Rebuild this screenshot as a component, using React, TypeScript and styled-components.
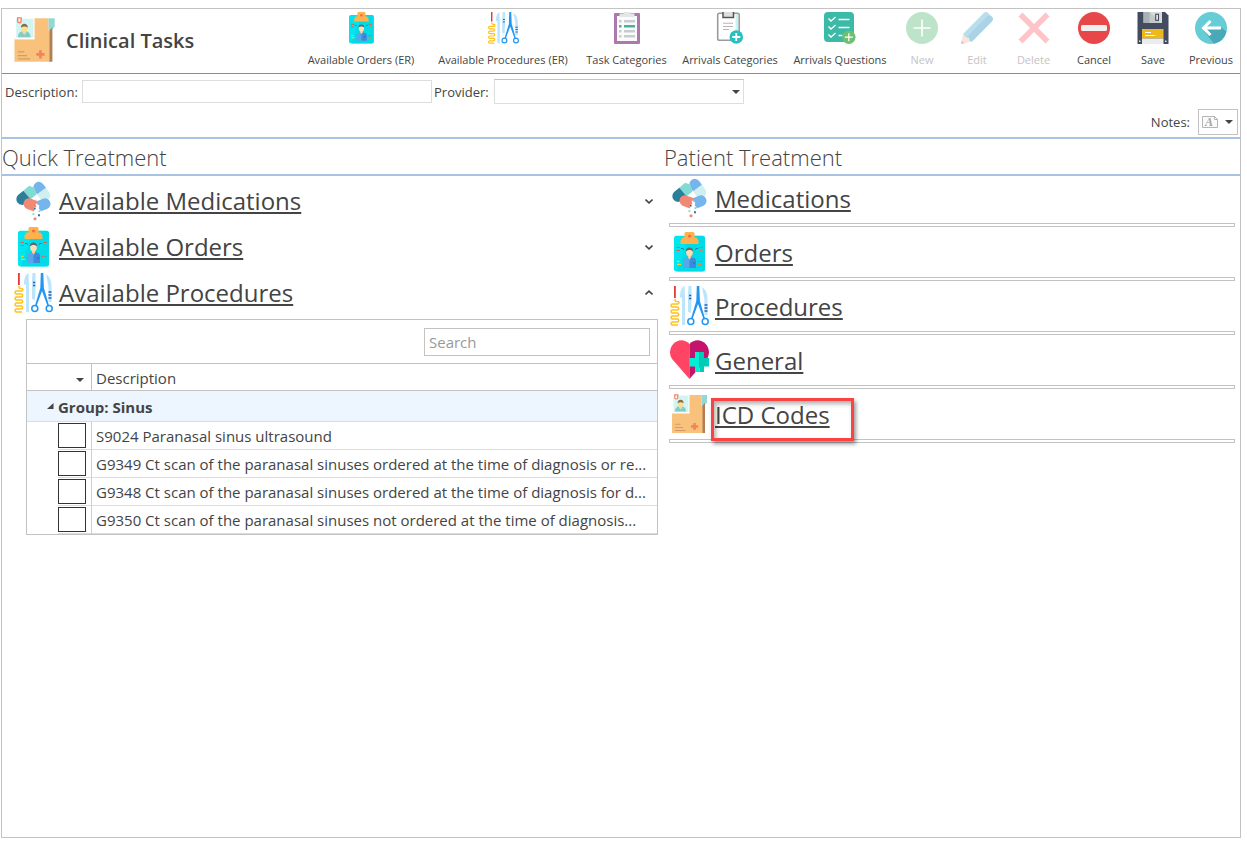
import React, { useState } from "react";
import styled, { createGlobalStyle, css } from "styled-components";

const GlobalStyle = createGlobalStyle`
  *, *::before, *::after { box-sizing: border-box; }
  body {
    margin: 0;
    background: #fff;
    color: #444;
    font-family: "Open Sans", "Noto Sans", sans-serif;
    font-size: 14px;
  }
  button, input, select { font: inherit; color: inherit; }
`;

const line = "#c3c3c3";
const accent = "#a9c3e2";

/* ---------- page frame ---------- */

const Page = styled.div`
  display: flex;
  min-height: 100vh;
  padding: 8px 6px 3px 1px;
`;

const Frame = styled.main`
  flex: 1;
  min-width: 0;
  border: 1px solid ${line};
`;

const Header = styled.header`
  display: flex;
  align-items: flex-start;
  justify-content: space-between;
  height: 65px;
  border-bottom: 1px solid #6a92c4;
`;

const Brand = styled.div`
  display: flex;
  align-items: center;
  gap: 9px;
  padding: 8px 0 0 9px;
`;

const Title = styled.h1`
  margin: 0;
  padding-top: 2px;
  font-size: 20px;
  line-height: 28px;
  font-weight: 600;
  white-space: nowrap;
`;

const Toolbar = styled.nav`
  display: flex;
`;

const ToolButton = styled.button<{ $width: number }>`
  display: flex;
  flex-direction: column;
  align-items: center;
  gap: 7px;
  width: ${(p) => p.$width}px;
  padding: 3px 0 0;
  border: 0;
  background: none;
  font-size: 11px;
  line-height: 18px;
  white-space: nowrap;
  &:disabled { color: #c4c4c4; }
`;

/* ---------- filter form ---------- */

const Form = styled.form`
  border-bottom: 2px solid ${accent};
  height: 65px;
  padding: 5px 2px 0 3px;
`;

const FieldRow = styled.div<{ $end?: boolean }>`
  display: flex;
  align-items: center;
  justify-content: ${(p) => (p.$end ? "flex-end" : "flex-start")};
  height: ${(p) => (p.$end ? 26 : 25)}px;
  margin-top: ${(p) => (p.$end ? 5 : 0)}px;
`;

const FieldLabel = styled.label<{ $width?: number }>`
  width: ${(p) => (p.$width ? `${p.$width}px` : "auto")};
  padding-right: ${(p) => (p.$width ? 0 : 8)}px;
  font-size: 13px;
  line-height: 18px;
  white-space: nowrap;
`;

const TextInput = styled.input`
  width: 350px;
  height: 23px;
  margin-right: 2px;
  padding: 0 4px;
  border: 1px solid #ddd;
  outline: 0;
`;

const SelectBox = styled.div`
  position: relative;
  width: 250px;
  height: 25px;
`;

const Select = styled.select`
  width: 100%;
  height: 100%;
  padding: 0 24px 0 4px;
  appearance: none;
  border: 1px solid #ddd;
  border-top-color: ${line};
  border-radius: 0;
  background: #fff;
  outline: 0;
`;

const SelectArrow = styled.span`
  position: absolute;
  top: 0;
  right: 4px;
  display: flex;
  align-items: center;
  height: 100%;
  pointer-events: none;
`;

const NotesButton = styled.button`
  display: flex;
  align-items: center;
  justify-content: space-between;
  width: 40px;
  height: 26px;
  padding: 0 4px 0 3px;
  border: 1px solid ${line};
  background: #fff;
`;

/* ---------- columns ---------- */

const Columns = styled.div`
  display: grid;
  grid-template-columns: 662fr 576fr;
`;

const ColumnTitle = styled.h2`
  margin: 0;
  height: 37px;
  border-bottom: 2px solid ${accent};
  font-size: 22px;
  line-height: 37px;
  font-weight: 300;
`;

const headingText = css`
  font-size: 24px;
  line-height: 36px;
  text-decoration: underline;
  text-decoration-thickness: 2px;
  text-underline-offset: 2px;
  text-decoration-skip-ink: none;
`;

const Accordion = styled.div`
  padding: 2px 6px 0 11px;
`;

const AccordionHeader = styled.button`
  display: flex;
  align-items: center;
  gap: 6px;
  width: 100%;
  height: 46px;
  padding: 0 5px 0 0;
  border: 0;
  background: none;
  text-align: left;
`;

const AccordionLabel = styled.span`
  flex: 1;
  ${headingText}
`;

const Panel = styled.section`
  margin: 3px 0 0 13px;
  border: 1px solid ${line};
`;

const SearchBar = styled.div`
  display: flex;
  align-items: center;
  justify-content: flex-end;
  height: 44px;
  padding-right: 7px;
  border-bottom: 1px solid ${line};
`;

const SearchInput = styled.input`
  width: 226px;
  height: 28px;
  padding: 0 4px;
  border: 1px solid ${line};
  font-size: 15px;
  outline: 0;
  &::placeholder { color: #999; opacity: 1; }
`;

const Table = styled.table`
  width: 100%;
  table-layout: fixed;
  border-spacing: 0;
  font-size: 15px;
  line-height: 20px;
`;

const IndentCol = styled.col`
  width: 31px;
`;

const CheckCol = styled.col`
  width: 34px;
`;

const HeadCell = styled.th<{ $sort?: boolean }>`
  height: 27px;
  padding: ${(p) => (p.$sort ? "0 7px 2px 0" : "2px 4px 0")};
  border-bottom: 1px solid ${line};
  border-right: ${(p) => (p.$sort ? `1px solid ${line}` : "0")};
  text-align: ${(p) => (p.$sort ? "right" : "left")};
  font-weight: 400;
`;

const GroupCell = styled.th`
  height: 31px;
  padding: 1px 0 0 20px;
  border-bottom: 1px solid #dcdcdc;
  background: #edf5fe;
  text-align: left;
`;

const GroupToggle = styled.button`
  display: flex;
  align-items: center;
  gap: 4px;
  padding: 0;
  border: 0;
  background: none;
  font-weight: 700;
`;

const Cell = styled.td<{ $kind: "indent" | "check" | "text" }>`
  height: 28px;
  padding: ${(p) => (p.$kind === "text" ? "1px 4px 0" : "0")};
  border-bottom: ${(p) => (p.$kind === "indent" ? "0" : "1px solid #dcdcdc")};
  border-right: ${(p) => (p.$kind === "check" ? "1px solid #c9cfd6" : "0")};
  overflow: hidden;
  white-space: nowrap;
`;

const Checkbox = styled.input`
  display: block;
  appearance: none;
  width: 28px;
  height: 25px;
  margin: 0;
  border: 1px solid #333;
  background: #fff;
  &:checked { background: #6a92c4; }
`;

const TaskList = styled.ul`
  margin: 0;
  padding: 2px 5px 0 5px;
  list-style: none;
`;

const TaskItem = styled.li`
  position: relative;
  height: 54px;
`;

const TaskLink = styled.a`
  display: flex;
  gap: 6px;
  height: 45px;
  color: inherit;
  text-decoration: none;
`;

const TaskLabel = styled.span`
  padding-top: 3px;
  ${headingText}
`;

const Splitter = styled.div`
  height: 4px;
  border: 1px solid ${line};
`;

const Highlight = styled.div`
  position: absolute;
  left: 42px;
  top: 4px;
  width: 143px;
  height: 43px;
  border: 3px solid #fb4343;
  box-shadow: 2px 3px 4px rgba(0, 0, 0, 0.4), inset 2px 3px 4px rgba(0, 0, 0, 0.3);
  pointer-events: none;
`;

/* ---------- icons ---------- */

type IconProps = { size: number };

const FolderIcon = ({ size }: IconProps) => (
  <svg width={size} height={size} viewBox="0 0 40 40" aria-hidden="true">
    <path d="M32.500 1H38v7.500l-3 3h-2.500z" fill="#93d8d6" />
    <path d="M33 12l3-3v30h-3z" fill="#b07f58" />
    <path d="M3 18H20V1H32.500V12L33.500 11V39H3z" fill="#f8c27c" />
    <path d="M3 0H20.500V19.500H3z" fill="#fff" />
    <path d="M4.500 1.500H19.500V18H4.500z" fill="#d2f5f1" />
    <path d="M6 17.500c0-3.500 2-5 4-5h3c2 0 4 1.500 4 5z" fill="#7fcdca" />
    <path d="M10 12h3.200v2l-1.600 1.500-1.600-1.500z" fill="#f5d79c" />
    <circle cx="11.600" cy="9.800" r="2.900" fill="#fbe08d" />
    <path d="M8.500 9.200c0-4.500 6.200-4.500 6.200 0-2-1.200-4-1.200-6.200 0z" fill="#8b6a4f" />
    <path d="M5.800.8h3v3c0 1.600-3 1.600-3 0z" fill="#fff" stroke="#f6805f" strokeWidth="1.200" />
    <path d="M6 30.300h5.500M6 33.500h8M6 36.500h10.500" stroke="#d09d68" strokeWidth="1.100" />
    <path d="M25.600 29v7M22 32.500h7.200" stroke="#f9805c" strokeWidth="2.400" />
  </svg>
);

const PillsIcon = ({ size }: IconProps) => (
  <svg width={size} height={size} viewBox="0 0 40 40" aria-hidden="true">
    <g transform="translate(28.500 10) rotate(54)">
      <path d="M0-5.500H5.500a5.500 5.500 0 0 1 0 11H0z" fill="#d0eff0" />
      <path d="M0-5.500H-4.500a5.500 5.500 0 0 0 0 11H0z" fill="#75b5ec" />
    </g>
    <g transform="translate(14 14) rotate(-40)">
      <path d="M0-5.700H7.500l3 5-3 6.400H0z" fill="#80dbd3" />
      <path d="M0-5.700H-6.500a5.700 5.700 0 0 0 0 11.400H0z" fill="#2b7f9b" />
    </g>
    <g transform="translate(16 22.800) rotate(20)">
      <path d="M0-5.500H8.500L6.500-1.500l1.500 2-1.500 2 1 3H0a5.500 5.500 0 0 1 0-11z" fill="#f18a75" />
    </g>
    <g transform="translate(32 22.800) rotate(-22)">
      <path d="M0-5.500H-6l-1.500 3 1.500 2-1.500 2.500 1 3.500H0a5.500 5.500 0 0 0 0-11z" fill="#75b5ec" />
    </g>
    <path d="M21 27h1.600v1.600H21zM25 33.300h1.900v1.900H25z" fill="#2b6b8f" />
    <path d="M25.500 29.200h1.900v1.900h-1.900zM19.500 32.200h1.900v1.900h-1.900z" fill="#80dbd3" />
    <rect x="20.600" y="36.600" width="2.800" height="2.600" rx="0.600" fill="#f18a75" />
  </svg>
);

const OrdersIcon = ({ size }: IconProps) => (
  <svg width={size} height={size} viewBox="0 0 40 40" aria-hidden="true">
    <rect x="5" y="3.800" width="31" height="35.700" rx="2.500" fill="#00e5ee" />
    <path d="M20.500 3.800H33.500a2.500 2.500 0 0 1 2.500 2.500V37a2.500 2.500 0 0 1-2.500 2.500H8z" fill="#00d3e2" opacity=".6" />
    <path d="M16.500 0h8l1 1v4.500h2l2 3V12h-18V8.500l2-3h2V1z" fill="#ffb14e" />
    <circle cx="20.500" cy="4" r="1.500" fill="#ff6243" />
    <path d="M14.300 36V29c0-2.500 2-3.500 6.200-3.500s6.500 1 6.500 3.500v7z" fill="#56a6ea" />
    <path d="M20.500 28.500l2-3c3 .1 4.500 1 4.500 3.500v7h-6.500z" fill="#3f88db" />
    <path d="M19 23h3v2.500l-1.500 2-1.500-2z" fill="#ffc98f" />
    <ellipse cx="20.500" cy="20.500" rx="3.300" ry="3.900" fill="#ffdcb4" />
    <path d="M16.800 19.500c-.5-5.200 7.900-5.200 7.400 0-2-2-5.300-2-7.400 0z" fill="#676767" />
    <path d="M7.500 15.500H11M7.500 18.500H11M30 15.500h3.500M28.500 29.500h1.500M31.500 29.500H33" stroke="#ef5b45" strokeWidth="1.200" />
    <path d="M30 18.500h3.500M28.500 32.500h4.500" stroke="#d68a45" strokeWidth="1.200" />
    <path d="M12 16.500h1.500l1.500 1M29 16.500h-1.500l-1.500 1M24 31h2" stroke="#2467b8" strokeWidth="1" fill="none" />
    <path d="M8 29.300h2.500M8 32.300h4" stroke="#f6d329" strokeWidth="1.300" />
  </svg>
);

const ProceduresIcon = ({ size }: IconProps) => (
  <svg width={size} height={size} viewBox="0 0 40 40" aria-hidden="true">
    <path d="M5.900 0V12" stroke="#e53935" strokeWidth="1.800" />
    <path
      d="M6 13v1.500c0 2 4 0 4 2s-2 1.500-4 1.500H3.500c-2 0-2 3 0 3H8c2.300 0 2.300 3 0 3H3.500c-2 0-2 3 0 3H8c2.300 0 2.300 3 0 3H3.500c-2 0-2 3 0 3H8c2.300 0 2.300 3 0 3H3.500c-2 0-2 3 0 3H9"
      fill="none" stroke="#ffc21a" strokeWidth="1.500"
    />
    <path d="M15.500 0c-3.500 2-4.500 6-4.500 11.500h2V39h3V11.500z" fill="#bbe4fd" />
    <path d="M19.500 0h3v17l-.5 10-3-1V8z" fill="#bbe4fd" />
    <path d="M33 1c4 3 5.500 7 5.500 12v16h-3V14z" fill="#bbe4fd" />
    <path d="M20 9.500h2.300M20 12.500h2.300M35.500 19h3M35.500 22h3M35.500 25h3" stroke="#2462b7" strokeWidth="1.300" />
    <path d="M27.800 0h2.500l.6 15L36 32.500l-1.500.6L29 18l-5.500 15.100-1.500-.6L27.300 15z" fill="#2196f3" />
    <circle cx="21.800" cy="35.600" r="3" fill="none" stroke="#2196f3" strokeWidth="1.500" />
    <circle cx="36.200" cy="35.600" r="3" fill="none" stroke="#2196f3" strokeWidth="1.500" />
  </svg>
);

const HeartIcon = ({ size }: IconProps) => (
  <svg width={size} height={size} viewBox="0 0 40 40" aria-hidden="true">
    <path d="M20.500 39L3.500 19.500C-5 7.500 10.500-6.500 20.500 4z" fill="#ff4464" />
    <path d="M20.500 39L37.500 19.500C46 7.500 30.500-6.500 20.500 4z" fill="#c4156c" />
    <path d="M26 12h4.500v20H26v-5.500h-5.500V18H26z" fill="#00f0d6" />
    <path d="M30.500 12H35v6h5v8.500h-5V32h-4.500z" fill="#00cdb8" />
  </svg>
);

const TaskCategoriesIcon = ({ size }: IconProps) => (
  <svg width={size} height={size} viewBox="0 0 32 32" aria-hidden="true">
    <rect x="3" y="1" width="26" height="31" rx="1" fill="#ab79ab" />
    <path d="M6 4h20v25H6z" fill="#fbfbfb" />
    <path d="M8.500 1.500h4V0h7v1.500h4V5h-15z" fill="#e3e6e8" />
    <path d="M8 9.300h2.500M13 9.300h11M8 19.300h2.500M13 19.300h11M8 24.300h2.500M13 24.300h11" stroke="#c8cccf" strokeWidth="2.600" />
    <path d="M8 14.300h2.500M13 14.300h11" stroke="#47b39d" strokeWidth="2.600" />
  </svg>
);

const ArrivalsCategoriesIcon = ({ size }: IconProps) => (
  <svg width={size} height={size} viewBox="0 0 32 32" aria-hidden="true">
    <rect x="3.700" y="1.200" width="21.500" height="27" rx="1.800" fill="#fff" stroke="#9b9b9b" strokeWidth="1.600" />
    <path d="M21.500 2h2.500v20h-2.500z" fill="#c9f2f2" />
    <path d="M9 0v5.500h10.500V0" fill="#ddd" stroke="#555" strokeWidth="1.500" />
    <path d="M9 11.200h10M9 14.500h10M9 17.500h6" stroke="#b5b5b5" strokeWidth="1.100" />
    <circle cx="22.300" cy="25" r="6.800" fill="#28bfc1" />
    <path d="M22.300 21v8M18.300 25h8" stroke="#fff" strokeWidth="1.800" />
  </svg>
);

const ArrivalsQuestionsIcon = ({ size }: IconProps) => (
  <svg width={size} height={size} viewBox="0 0 32 32" aria-hidden="true">
    <rect width="30" height="30" rx="4" fill="#3cbaa8" />
    <path d="M4.500 6.500L7 9l4.500-4M4.500 14.500L7 17l4.500-4M4.500 22.500L7 25l4.500-4M14.500 7.500h11M14.500 15.500h11M14.500 23.500h4" fill="none" stroke="#fff" strokeWidth="1.300" />
    <circle cx="24.800" cy="25.200" r="6.700" fill="#6fbf73" />
    <path d="M24.800 21.200v8M20.800 25.200h8" stroke="#fff" strokeWidth="1.200" />
  </svg>
);

const NewIcon = ({ size }: IconProps) => (
  <svg width={size} height={size} viewBox="0 0 32 32" aria-hidden="true">
    <circle cx="16" cy="16" r="16" fill="#bde4c8" />
    <path d="M16 7.500v17M7.500 16h17" stroke="#fff" strokeWidth="1.600" />
  </svg>
);

const EditIcon = ({ size }: IconProps) => (
  <svg width={size} height={size} viewBox="0 0 32 32" aria-hidden="true">
    <path d="M2 22L0 32l11-2.500z" fill="#fbe4dd" />
    <path d="M.7 28.500L0 32l3.500-.8z" fill="#c3cbd5" />
    <path d="M2 22L22 1.700c1.500-1.800 3.500-2.200 5-.8l4 4c1.400 1.500 1.300 3-.2 4.600L11 29.500l-2-.5-1-3-3.500-1z" fill="#b9dfed" />
    <path d="M5.500 25.200L26.500 4l3.500-.2 1 1.100c1.400 1.500 1.300 3-.2 4.600L11 29.500l-2-.5-1-3z" fill="#abd2e6" />
  </svg>
);

const DeleteIcon = ({ size }: IconProps) => (
  <svg width={size} height={size} viewBox="0 0 32 32" aria-hidden="true">
    <path d="M2.500 2.500l27 27M29.500 2.500l-27 27" stroke="#ffc4c8" strokeWidth="5.600" />
  </svg>
);

const CancelIcon = ({ size }: IconProps) => (
  <svg width={size} height={size} viewBox="0 0 32 32" aria-hidden="true">
    <circle cx="16" cy="16" r="16" fill="#e84749" />
    <rect x="3" y="13" width="26" height="6" rx="1.500" fill="#f2eff0" />
  </svg>
);

const SaveIcon = ({ size }: IconProps) => (
  <svg width={size} height={size} viewBox="0 0 32 32" aria-hidden="true">
    <path d="M.5 0H28l3.500 3.500V32H.5z" fill="#434b61" />
    <path d="M6.500 0h18.500v11H6.500z" fill="#c3c8c9" />
    <path d="M12.500 0H25v11h-1z" fill="#d8dcdc" />
    <path d="M6.500 0h6v11h-6z" fill="#aab1b4" />
    <rect x="18.700" y="2.300" width="2.800" height="6" fill="#e8ebeb" stroke="#434b61" strokeWidth="1.100" />
    <path d="M5 17h21.500v9.500H5z" fill="#ecb81c" />
    <path d="M5 26.500h21.500V32H5z" fill="#e9edee" />
    <path d="M8 20.500h6M8 23.500h9M17.500 23.500h1" stroke="#fff" strokeWidth="1" />
    <path d="M2 28.500h1.500V30H2zM28 28.500h1.500V30H28z" fill="#dfe3e6" />
  </svg>
);

const PreviousIcon = ({ size }: IconProps) => (
  <svg width={size} height={size} viewBox="0 0 32 32" aria-hidden="true">
    <circle cx="16" cy="16" r="16" fill="#66cdd7" />
    <path d="M8 17.500l11 14.200A16 16 0 0 0 31.500 19.600L25.500 15z" fill="#49a9b7" />
    <path d="M26 16H8.500M15.500 9l-7 7 7 7" fill="none" stroke="#fff" strokeWidth="3" />
  </svg>
);

const NotesIcon = () => (
  <svg width="17" height="14" viewBox="0 0 17 14" aria-hidden="true">
    <path d="M.5 1.500H12.500l3 3V12.500H.5z" fill="#fafafa" stroke="#b5b5b5" />
    <path d="M12.500 1v3.500h3.500" fill="none" stroke="#b5b5b5" />
    <text x="3" y="11" fontFamily="Liberation Serif, serif" fontSize="12" fontStyle="italic" fontWeight="700" fill="#a5a5a5">A</text>
  </svg>
);

const Caret = () => (
  <svg width="8" height="4" viewBox="0 0 8 4" aria-hidden="true">
    <path d="M0 0h8L4 4z" fill="#444" />
  </svg>
);

const Chevron = ({ up }: { up: boolean }) => (
  <svg width="8" height="8" viewBox="0 0 8 8" aria-hidden="true">
    <path d={up ? "M.5 5.500L4 2.200l3.500 3.300" : "M.5 2.500L4 5.800l3.500-3.300"} fill="none" stroke="#444" strokeWidth="1.600" />
  </svg>
);

const GroupArrow = () => (
  <svg width="7" height="7" viewBox="0 0 7 7" aria-hidden="true">
    <path d="M6.500 0v6H0z" fill="#444" />
  </svg>
);

/* ---------- data ---------- */

const tools = [
  { label: "Available Orders (ER)", width: 130, Icon: OrdersIcon },
  { label: "Available Procedures (ER)", width: 154, Icon: ProceduresIcon },
  { label: "Task Categories", width: 93, Icon: TaskCategoriesIcon },
  { label: "Arrivals Categories", width: 114, Icon: ArrivalsCategoriesIcon },
  { label: "Arrivals Questions", width: 106, Icon: ArrivalsQuestionsIcon },
  { label: "New", width: 58, Icon: NewIcon, disabled: true },
  { label: "Edit", width: 52, Icon: EditIcon, disabled: true },
  { label: "Delete", width: 61, Icon: DeleteIcon, disabled: true },
  { label: "Cancel", width: 60, Icon: CancelIcon },
  { label: "Save", width: 58, Icon: SaveIcon },
  { label: "Previous", width: 58, Icon: PreviousIcon },
];

const sections = [
  { id: "medications", label: "Available Medications", Icon: PillsIcon },
  { id: "orders", label: "Available Orders", Icon: OrdersIcon },
  { id: "procedures", label: "Available Procedures", Icon: ProceduresIcon },
];

const procedures = [
  "S9024 Paranasal sinus ultrasound",
  "G9349 Ct scan of the paranasal sinuses ordered at the time of diagnosis or re...",
  "G9348 Ct scan of the paranasal sinuses ordered at the time of diagnosis for d...",
  "G9350 Ct scan of the paranasal sinuses not ordered at the time of diagnosis...",
];

const tasks = [
  { label: "Medications", Icon: PillsIcon },
  { label: "Orders", Icon: OrdersIcon },
  { label: "Procedures", Icon: ProceduresIcon },
  { label: "General", Icon: HeartIcon },
  { label: "ICD Codes", Icon: FolderIcon, highlighted: true },
];

const ProcedurePanel = () => (
  <Panel aria-label="Available procedures">
    <SearchBar>
      <SearchInput type="text" placeholder="Search" aria-label="Search" />
    </SearchBar>
    <Table>
      <colgroup>
        <IndentCol />
        <CheckCol />
        <col />
      </colgroup>
      <thead>
        <tr>
          <HeadCell $sort colSpan={2} aria-label="Selected"><Caret /></HeadCell>
          <HeadCell>Description</HeadCell>
        </tr>
      </thead>
      <tbody>
        <tr>
          <GroupCell colSpan={3}>
            <GroupToggle type="button" aria-expanded="true"><GroupArrow />Group: Sinus</GroupToggle>
          </GroupCell>
        </tr>
        {procedures.map((text, i) => (
          <tr key={text}>
            <Cell $kind="indent" />
            <Cell $kind="check"><Checkbox type="checkbox" id={`procedure-${i}`} /></Cell>
            <Cell $kind="text"><label htmlFor={`procedure-${i}`}>{text}</label></Cell>
          </tr>
        ))}
      </tbody>
    </Table>
  </Panel>
);

export default function App() {
  const [open, setOpen] = useState("procedures");

  return (
    <>
      <GlobalStyle />
      <Page>
        <Frame>
          <Header>
            <Brand>
              <FolderIcon size={46} />
              <Title>Clinical Tasks</Title>
            </Brand>
            <Toolbar aria-label="Actions">
              {tools.map(({ label, width, Icon, disabled }) => (
                <ToolButton key={label} type="button" $width={width} disabled={disabled}>
                  <Icon size={32} />
                  {label}
                </ToolButton>
              ))}
            </Toolbar>
          </Header>

          <Form onSubmit={(e) => e.preventDefault()}>
            <FieldRow>
              <FieldLabel $width={77} htmlFor="description">Description:</FieldLabel>
              <TextInput id="description" type="text" />
              <FieldLabel $width={60} htmlFor="provider">Provider:</FieldLabel>
              <SelectBox>
                <Select id="provider" defaultValue=""><option value="" /></Select>
                <SelectArrow><Caret /></SelectArrow>
              </SelectBox>
            </FieldRow>
            <FieldRow $end>
              <FieldLabel htmlFor="notes">Notes:</FieldLabel>
              <NotesButton id="notes" type="button"><NotesIcon /><Caret /></NotesButton>
            </FieldRow>
          </Form>

          <Columns>
            <section>
              <ColumnTitle>Quick Treatment</ColumnTitle>
              <Accordion>
                {sections.map(({ id, label, Icon }) => (
                  <React.Fragment key={id}>
                    <AccordionHeader
                      type="button"
                      aria-expanded={open === id}
                      onClick={() => setOpen(open === id ? "" : id)}
                    >
                      <Icon size={40} />
                      <AccordionLabel>{label}</AccordionLabel>
                      <Chevron up={open === id} />
                    </AccordionHeader>
                    {id === "procedures" && open === id && <ProcedurePanel />}
                  </React.Fragment>
                ))}
              </Accordion>
            </section>
            <section>
              <ColumnTitle>Patient Treatment</ColumnTitle>
              <TaskList>
                {tasks.map(({ label, Icon, highlighted }) => (
                  <TaskItem key={label}>
                    <TaskLink href={`#${label.toLowerCase().replace(" ", "-")}`}>
                      <Icon size={40} />
                      <TaskLabel>{label}</TaskLabel>
                    </TaskLink>
                    <Splitter />
                    {highlighted && <Highlight />}
                  </TaskItem>
                ))}
              </TaskList>
            </section>
          </Columns>
        </Frame>
      </Page>
    </>
  );
}
